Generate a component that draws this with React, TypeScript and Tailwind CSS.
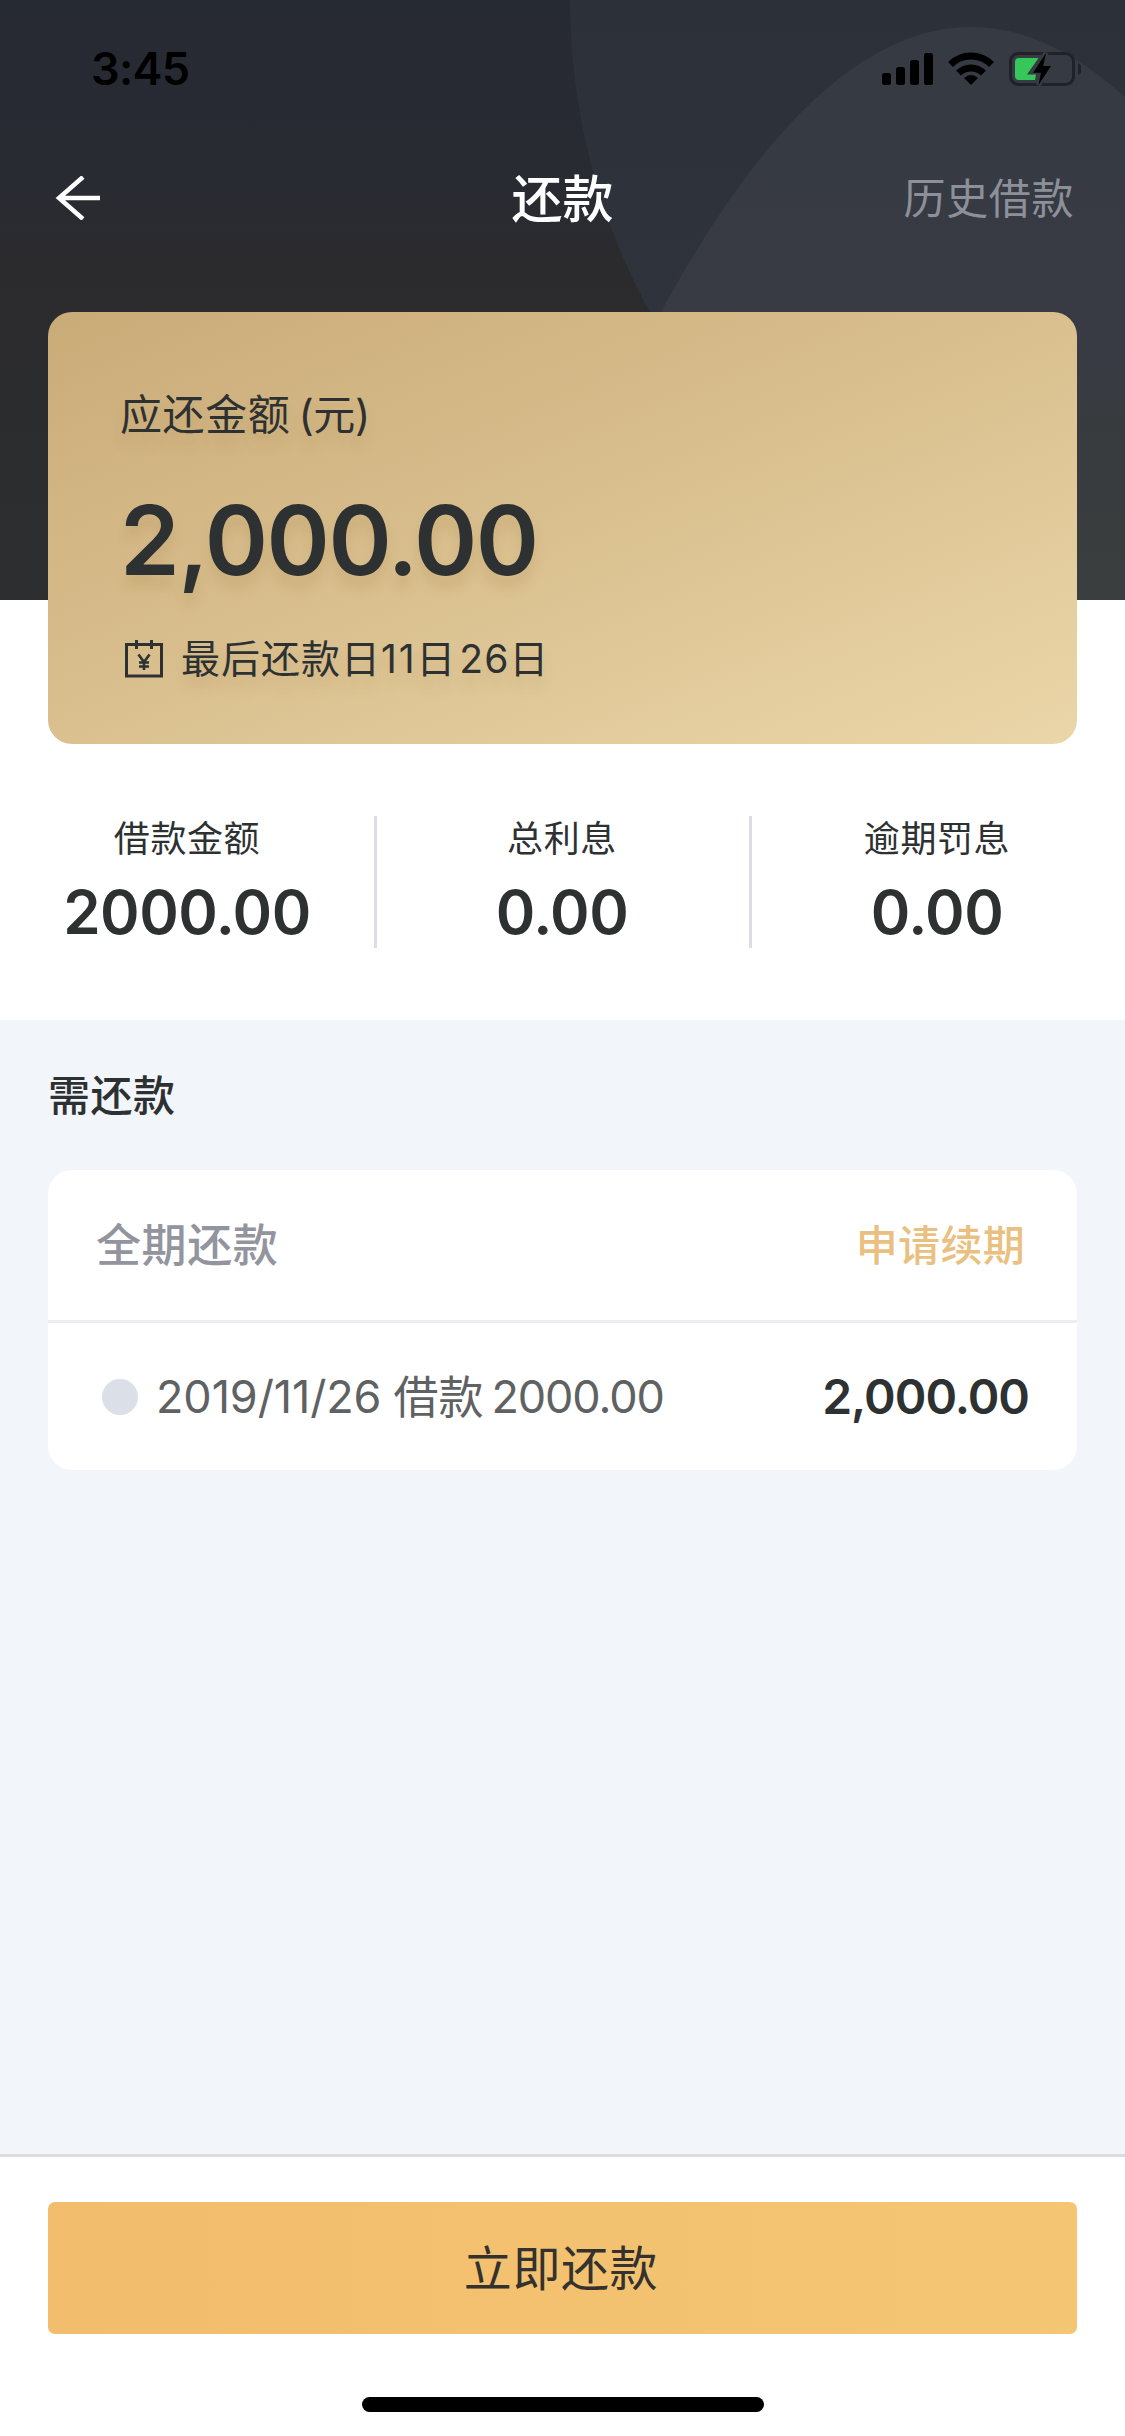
const SUMMARY = [
  { label: '借款金额', value: '2000.00' },
  { label: '总利息', value: '0.00' },
  { label: '逾期罚息', value: '0.00' },
]

const BILLS = [{ id: 1, date: '2019/11/26', principal: '2000.00', amount: '2,000.00' }]

function HeaderBackdrop() {
  return (
    <svg className="absolute inset-0 h-full w-full" viewBox="0 0 1125 600" fill="none">
      <defs>
        <linearGradient id="outer" x1="0" y1="0" x2="0" y2="1">
          <stop offset="0.5" stopColor="#2c3039" />
          <stop offset="0.75" stopColor="#2f333b" />
          <stop offset="1" stopColor="#2f3235" />
        </linearGradient>
        <linearGradient id="dome" x1="0" y1="0" x2="0" y2="1">
          <stop offset="0.2" stopColor="#363a42" />
          <stop offset="0.58" stopColor="#383b43" />
          <stop offset="0.68" stopColor="#383b3e" />
          <stop offset="1" stopColor="#3a3e3e" />
        </linearGradient>
      </defs>
      <circle cx="1220" cy="0" r="650" fill="url(#outer)" />
      <path d="M531 601Q971 -547 1411 601Z" fill="url(#dome)" />
    </svg>
  )
}

function StatusBar() {
  return (
    <div className="flex h-[132px] items-start justify-between pl-[91px] pr-[44px]">
      <span className="mt-[42px] text-[45px] font-semibold leading-[54px] tracking-[-0.7px] text-black">3:45</span>
      <svg className="mt-[48px] h-[42px] w-[200px]" viewBox="881 48 200 42" fill="none">
        <g fill="#000">
          <rect x="882" y="73" width="9" height="12" rx="2.5" />
          <rect x="896" y="67" width="9" height="18" rx="2.5" />
          <rect x="910" y="60" width="9" height="25" rx="2.5" />
          <rect x="924" y="53" width="9" height="32" rx="2.5" />
        </g>
        <g stroke="#000" strokeWidth="7">
          <path d="M950.5 64.5A29 29 0 0 1 991.5 64.5" />
          <path d="M958.5 73A18 18 0 0 1 983.5 73" />
        </g>
        <path d="M971 85L964 78Q971 72 978 78Z" fill="#000" />
        <rect x="1010.5" y="53.5" width="63" height="31" rx="8" stroke="#1f2229" strokeWidth="3" />
        <path d="M1078 63q4 2 4 6t-4 6z" fill="#1f2229" />
        <path
          d="M1046 53L1033 72.7H1041L1038.5 85L1051 66H1043.2Z"
          fill="#000"
          stroke="#363a42"
          strokeWidth="5"
          paintOrder="stroke"
        />
        <path d="M1019 58H1038.5L1027 74.5H1036L1035 80H1019q-4 0-4-4V62q0-4 4-4Z" fill="#35c759" />
      </svg>
    </div>
  )
}

function NavBar() {
  return (
    <nav className="grid h-[132px] grid-cols-[1fr_auto_1fr] items-center px-[51px]">
      <svg className="ml-[4px] h-[44px] w-[46px]" viewBox="0 0 46 44" fill="none" stroke="#fff" strokeWidth="4.5">
        <path d="M28 1L4 22L28 43M4 22H45" />
      </svg>
      <h1 className="mt-[3px] text-[51px] font-medium leading-[72px] text-white">还款</h1>
      <span className="mt-[2px] text-right text-[42px] leading-[60px] tracking-[0.6px] text-[#8d9099]">历史借款</span>
    </nav>
  )
}

function CalendarIcon() {
  return (
    <svg className="h-[38px] w-[38px]" viewBox="0 0 38 38" fill="none" stroke="#2e3132" strokeWidth="3">
      <path d="M1.5 4.5H36.5V36H1.5ZM11.5 0V9M26.5 0V9" />
      <path d="M13.5 14.5L19 22L24.5 14.5M19 21.5V30M14 22.5H24M14 26.5H24" strokeWidth="2.6" />
    </svg>
  )
}

function AmountCard() {
  return (
    <section className="mx-[48px] mt-[48px] flex h-[432px] flex-col rounded-[24px] bg-[linear-gradient(158deg,#c9ab78_0%,#dac08f_50%,#ebd6a9_100%)] pl-[72px] pt-[73px] text-[#2e3132] [text-shadow:0_12px_12px_rgba(150,110,50,0.16)]">
      <p className="text-[42px] leading-[60px] tracking-[0.6px]">
        应还金额<span className="ml-[8px] tracking-[-0.4px]">(元)</span>
      </p>
      <p className="mt-[35px] text-[96px] font-semibold leading-[120px] tracking-[-1.5px]">2,000.00</p>
      <div className="mt-[32px] flex items-center gap-[18px] pl-[5px]">
        <CalendarIcon />
        <span className="text-[39px] leading-[54px] tracking-[1px]">
          最后还款日<span className="tracking-[1.8px]">11</span>日<span className="ml-[3px]">26</span>日
        </span>
      </div>
    </section>
  )
}

export default function App() {
  return (
    <div className="flex h-[2436px] w-[1125px] flex-col bg-[#f2f5fa] font-[Inter,'Noto_Sans_CJK_SC',sans-serif] text-[#2e3132]">
      <div className="relative h-[1020px] shrink-0 bg-white">
        <div className="absolute inset-x-0 top-0 h-[600px] overflow-hidden bg-[linear-gradient(180deg,#262a32_0%,#292b33_30%,#2b2b2e_42%,#2d2e30_100%)]">
          <HeaderBackdrop />
        </div>
        <div className="relative">
          <StatusBar />
          <NavBar />
          <AmountCard />
          <div className="mt-[72px] grid h-[132px] grid-cols-3">
            {SUMMARY.map((item) => (
              <div
                key={item.label}
                className="-ml-px flex flex-col items-center border-l-3 border-[#dcdde2] pr-[3px] first:border-transparent"
              >
                <span className="mt-[1px] text-[36px] leading-[44px] tracking-[0.6px]">{item.label}</span>
                <span className="mt-[15px] text-[60px] font-semibold leading-[72px] tracking-[-0.5px]">{item.value}</span>
              </div>
            ))}
          </div>
        </div>
      </div>

      <main className="flex-1 px-[48px] pt-[46px]">
        <h2 className="text-[42px] font-medium leading-[60px] tracking-[0.5px]">需还款</h2>
        <div className="mt-[44px] overflow-hidden rounded-[24px] bg-white">
          <div className="flex h-[153px] items-center justify-between border-b-3 border-[#ebedf2] pl-[48px] pr-[52px] pt-[2px]">
            <span className="text-[45px] font-medium leading-[60px] tracking-[0.6px] text-[#92959d]">全期还款</span>
            <button className="text-[42px] font-medium leading-[60px] tracking-[0.3px] text-[#e9c07f]">申请续期</button>
          </div>
          {BILLS.map((bill) => (
            <div key={bill.id} className="flex h-[147px] items-center pl-[54px] pr-[48px]">
              <span className="h-[36px] w-[36px] rounded-full bg-[#dbdfe8]" />
              <span className="ml-[18px] mt-[2px] flex text-[45px] leading-[60px] text-[#606163]">
                <span className="tracking-[-0.1px]">{bill.date}</span>
                <span className="ml-[12px] mt-[1px]">借款</span>
                <span className="ml-[8px] tracking-[-1.1px]">{bill.principal}</span>
              </span>
              <span className="ml-auto text-[48px] font-semibold leading-[60px] tracking-[-1px]">{bill.amount}</span>
            </div>
          ))}
        </div>
      </main>

      <footer className="flex h-[282px] flex-col items-center border-t-3 border-[#dadcdd] bg-white px-[48px] pt-[45px]">
        <button className="h-[132px] w-full rounded-[7px] bg-linear-to-r from-[#f2bd6c] to-[#f4c674] pr-[3px] pt-[2px] text-[48px] leading-[66px] tracking-[0.6px] text-[#33322e]">
          立即还款
        </button>
        <div className="mt-[63px] h-[15px] w-[402px] rounded-full bg-black" />
      </footer>
    </div>
  )
}
